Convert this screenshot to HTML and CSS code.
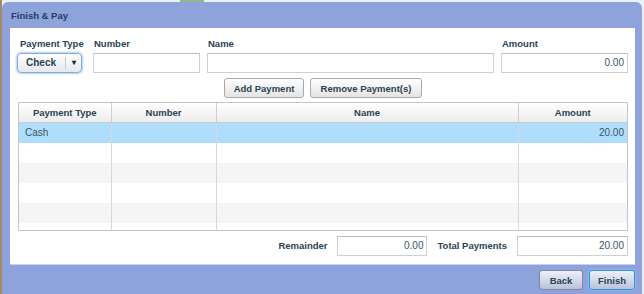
FILE: index.html
```html
<!DOCTYPE html>
<html>
<head>
<meta charset="utf-8">
<link rel="stylesheet" href="styles.css">
</head>
<body>
<div class="screen">
  <div class="topstrip"><span class="tab-mark"></span></div>
  <div class="dialog">
    <div class="title">Finish &amp; Pay</div>
    <div class="panel">
      <div class="form-grid">
        <label class="lbl lbl-type">Payment Type</label>
        <label class="lbl">Number</label>
        <label class="lbl">Name</label>
        <label class="lbl">Amount</label>
        <div class="select">
          <span class="select-text">Check</span>
          <span class="select-arrow">&#9662;</span>
        </div>
        <div class="field f-number"></div>
        <div class="field f-name"></div>
        <div class="field f-amount">0.00</div>
      </div>
      <div class="actions">
        <button class="btn btn-add">Add Payment</button>
        <button class="btn btn-remove">Remove Payment(s)</button>
      </div>
      <div class="grid">
        <table class="tbl">
          <colgroup>
            <col class="c1"><col class="c2"><col class="c3"><col class="c4">
          </colgroup>
          <thead>
            <tr><th>Payment Type</th><th>Number</th><th>Name</th><th>Amount</th></tr>
          </thead>
          <tbody>
            <tr class="sel"><td>Cash</td><td></td><td></td><td class="num">20.00</td></tr>
            <tr><td></td><td></td><td></td><td></td></tr>
            <tr class="alt"><td></td><td></td><td></td><td></td></tr>
            <tr><td></td><td></td><td></td><td></td></tr>
            <tr class="alt"><td></td><td></td><td></td><td></td></tr>
            <tr><td></td><td></td><td></td><td></td></tr>
          </tbody>
        </table>
      </div>
      <div class="totals">
        <span class="lbl tlabel">Remainder</span>
        <div class="field f-rem">0.00</div>
        <span class="lbl tlabel t2">Total Payments</span>
        <div class="field f-total">20.00</div>
      </div>
    </div>
    <div class="footer">
      <button class="fbtn">Back</button>
      <button class="fbtn primary">Finish</button>
    </div>
  </div>
</div>
</body>
</html>
```

FILE: styles.css
```css
html, body {
  margin: 0;
  padding: 0;
  width: 644px;
  height: 294px;
  overflow: hidden;
  background: #eef0f4;
  font-family: "Liberation Sans", Arial, sans-serif;
}

.screen {
  position: relative;
  width: 644px;
  height: 294px;
  border-left: 2px solid #a68a68;
  box-sizing: border-box;
}

.topstrip {
  height: 2px;
  position: relative;
}

.tab-mark {
  position: absolute;
  left: 178px;
  top: 0;
  width: 24px;
  height: 2px;
  background: #8fb88a;
}

.dialog {
  width: 640px;
  height: 292px;
  background: #8ea2dc;
  border-radius: 6px 6px 0 0;
  display: flex;
  flex-direction: column;
}

.title {
  height: 26px;
  line-height: 28px;
  padding-left: 9px;
  font-size: 9.5px;
  font-weight: bold;
  color: #22405e;
}

.panel {
  margin: 0 7px 0 8px;
  height: 237px;
  box-sizing: border-box;
  background: #fff;
  border-bottom: 1px solid #c9d2ea;
  padding: 10px 7px 0 8px;
  display: flex;
  flex-direction: column;
}

.lbl {
  font-size: 9.5px;
  font-weight: bold;
  color: #2a4354;
  line-height: 12px;
  padding-left: 1px;
}

.lbl-type { padding-left: 2px; }

.form-grid {
  display: grid;
  grid-template-columns: 75px 114px 294px 127px;
  grid-template-rows: 12px 20px;
  row-gap: 3px;
}

.field {
  height: 20px;
  box-sizing: border-box;
  border: 1px solid #cfcfcf;
  border-top-color: #bdbdbd;
  background: #fff;
  font-size: 10px;
  color: #3c5566;
  text-align: right;
  line-height: 18px;
  padding-right: 3px;
}

.f-number { width: 107px; }
.f-name { width: 287px; }
.f-amount { width: 127px; }

.select {
  width: 65px;
  height: 20px;
  box-sizing: border-box;
  margin-left: -1px;
  border: 1px solid #8fa9c9;
  border-radius: 4px;
  background: linear-gradient(#ffffff, #e6e8ec);
  box-shadow: 0 0 2px 1px #a9d3f7;
  display: flex;
  align-items: center;
  font-size: 10px;
  font-weight: bold;
  color: #2a4354;
}

.select-text {
  width: 48px;
  padding-left: 8px;
  box-sizing: border-box;
  border-right: 1px solid #c4c8cf;
  line-height: 12px;
}

.select-arrow {
  flex: 1;
  text-align: center;
  font-size: 8px;
  color: #222;
  line-height: 12px;
}

.actions {
  margin-top: 5px;
  display: flex;
  justify-content: center;
  gap: 6px;
  height: 20px;
}

.btn {
  height: 20px;
  padding: 0;
  border: 1px solid #a9a9a9;
  border-radius: 3px;
  background: linear-gradient(#ffffff, #e4e4e4);
  font-family: "Liberation Sans", Arial, sans-serif;
  font-size: 9.5px;
  font-weight: bold;
  color: #2a4354;
}

.btn-add { width: 80px; }
.btn-remove { width: 112px; }

.grid {
  margin-top: 4px;
  width: 610px;
  height: 129px;
  box-sizing: border-box;
  border: 1px solid #c6c6c6;
  overflow: hidden;
}

.tbl {
  width: 608px;
  border-collapse: collapse;
  table-layout: fixed;
}

.c1 { width: 92px; }
.c2 { width: 105px; }
.c3 { width: 302px; }
.c4 { width: 109px; }

.tbl th {
  height: 19px;
  padding: 0;
  background: linear-gradient(#ffffff, #ececec);
  border-bottom: 1px solid #cccccc;
  border-left: 1px solid #d0d0d0;
  font-size: 9.5px;
  font-weight: bold;
  color: #2a4354;
  text-align: center;
}

.tbl th:first-child,
.tbl td:first-child { border-left: none; }

.tbl td {
  height: 20px;
  padding: 0 3px 0 6px;
  border-left: 1px solid #d8d8d8;
  font-size: 10px;
  color: #3c5566;
  box-sizing: border-box;
}

.tbl tr.sel td { background: #afdefc; }
.tbl tr.alt td { background: #f5f5f5; }
.tbl td.num { text-align: right; }

.totals {
  margin-top: 5px;
  display: flex;
  justify-content: flex-end;
  align-items: center;
  height: 20px;
}

.tlabel { margin-right: 10px; }
.t2 { margin-left: 9px; }

.f-rem { width: 90px; }
.f-total { width: 111px; }

.footer {
  display: flex;
  justify-content: flex-end;
  gap: 6px;
  padding: 5px 7px 0 0;
}

.fbtn {
  height: 20px;
  padding: 0;
  border: 1px solid #7d88a5;
  border-radius: 3px;
  background: linear-gradient(#eef1f8, #b9c2da);
  font-family: "Liberation Sans", Arial, sans-serif;
  font-size: 9.5px;
  font-weight: bold;
  color: #2a4354;
  width: 44px;
}

.fbtn.primary {
  width: 46px;
  border-color: #3b8fdc;
  box-shadow: 0 0 1px 1px #7fbff0;
}
```
